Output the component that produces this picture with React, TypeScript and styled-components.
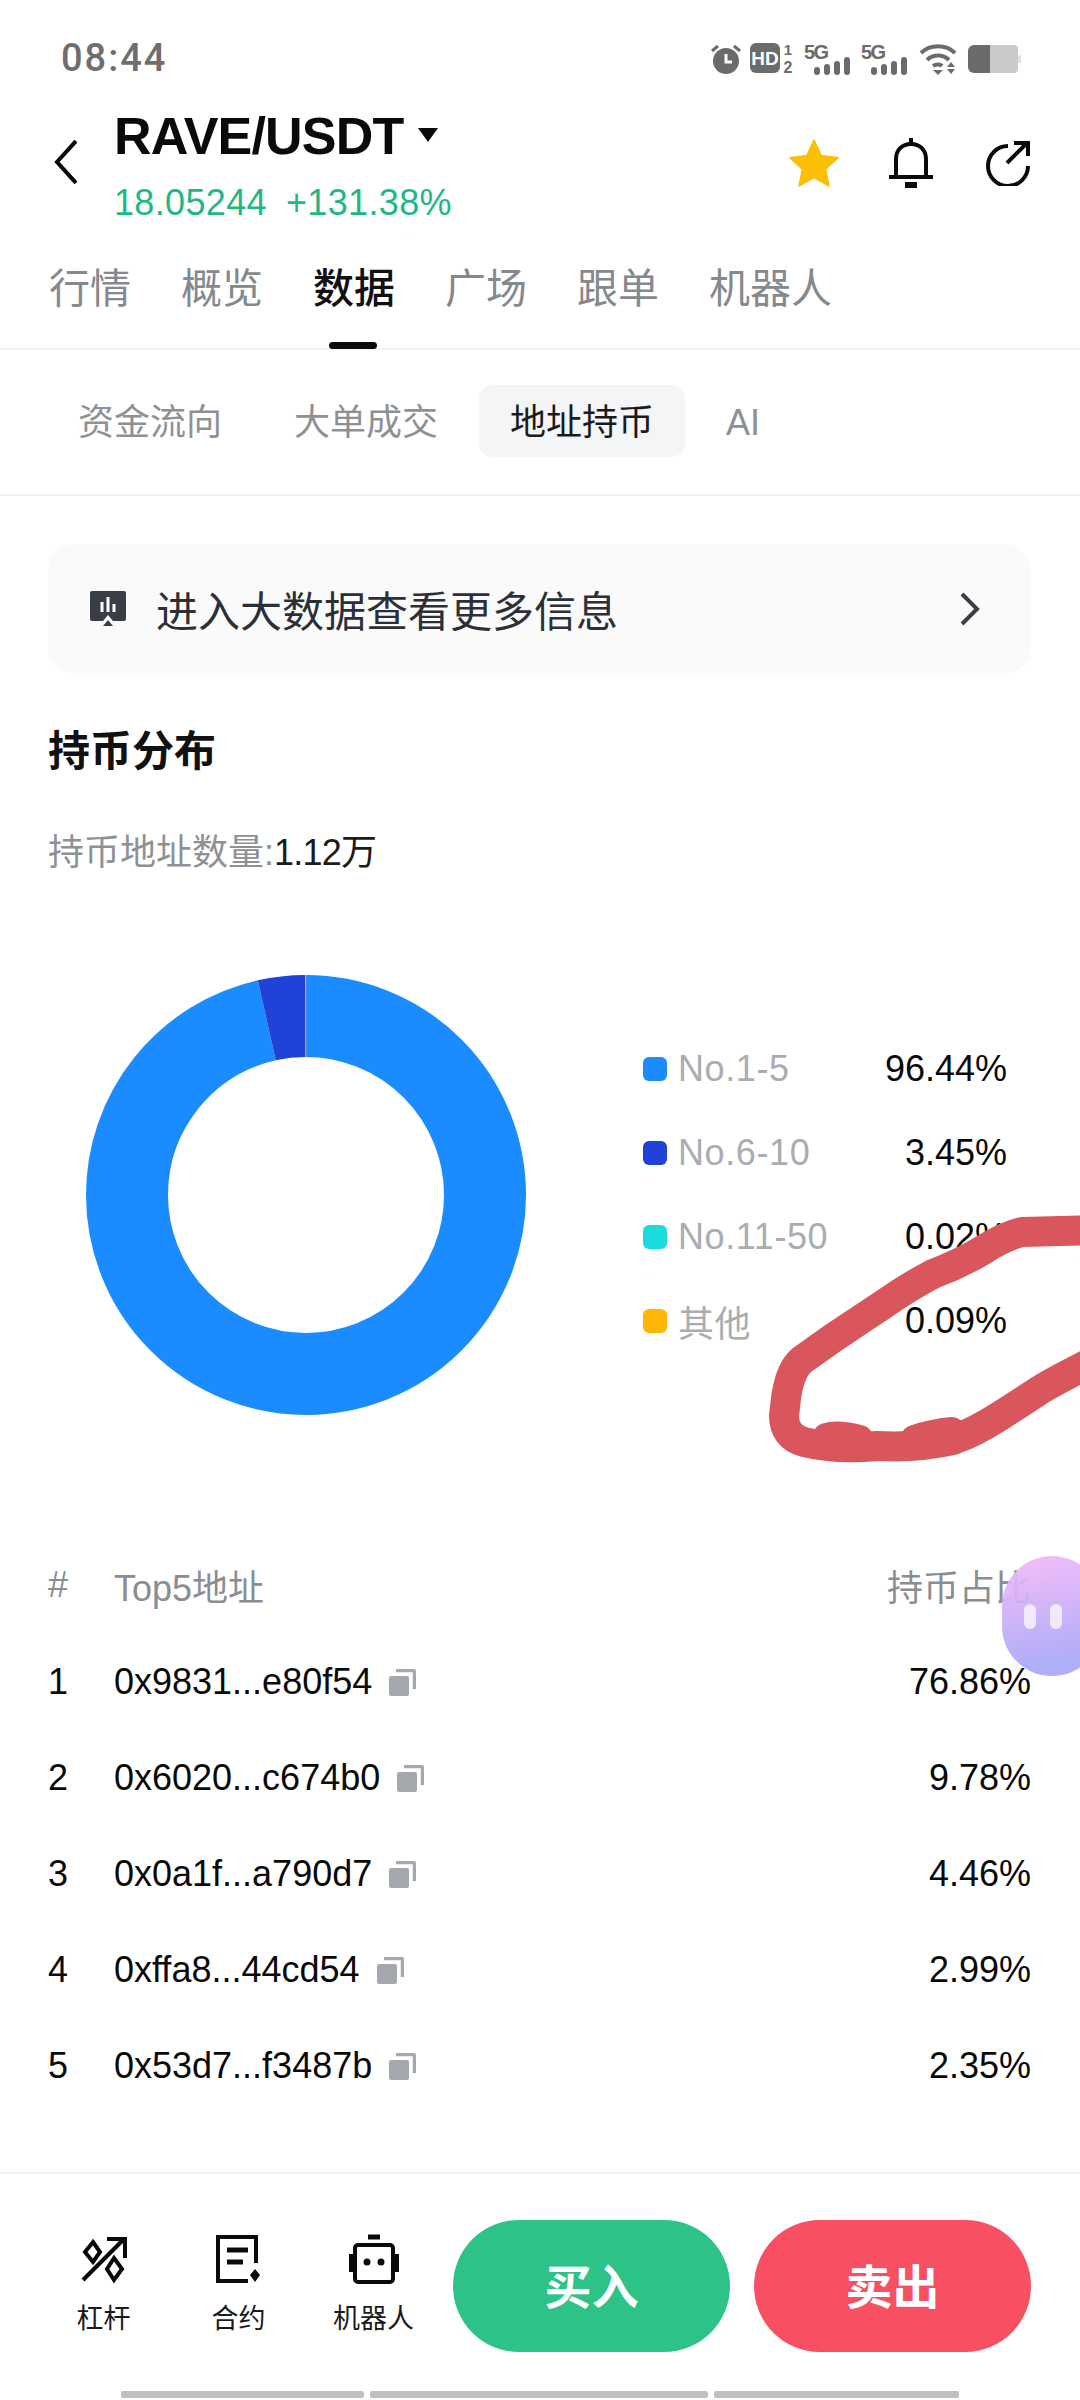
import React from "react";
import styled, { createGlobalStyle } from "styled-components";

const FONT = `"Liberation Sans", "Noto Sans CJK SC", sans-serif`;

const GlobalStyle = createGlobalStyle`
  html, body {
    margin: 0;
    padding: 0;
    background: #fff;
    font-family: ${FONT};
  }
  * { box-sizing: border-box; }
`;

const Page = styled.div`
  position: relative;
  width: 1080px;
  height: 2400px;
  overflow: hidden;
  display: flex;
  flex-direction: column;
  background: #fff;
`;

const StatusBar = styled.div`
  height: 116px;
  flex: none;
  padding: 0 58px 0 61px;
  display: flex;
  align-items: center;
  justify-content: space-between;
  color: #6b6b6b;
`;

const Time = styled.span`
  font-family: Roboto, sans-serif;
  font-size: 38px;
  font-weight: 500;
  letter-spacing: 2px;
  color: #6e6e6e;
`;

const StatusIcons = styled.div`
  display: flex;
  align-items: center;
  margin-top: 2px;
`;

const Header = styled.div`
  height: 134px;
  flex: none;
  display: flex;
  align-items: flex-start;
  padding: 0 50px 0 54px;
`;

const BackButton = styled.svg`
  margin-top: 24px;
  flex: none;
`;

const TitleBlock = styled.div`
  margin-left: 37px;
  flex: 1;
`;

const TitleLine = styled.div`
  height: 40px;
  display: flex;
  align-items: center;
  font-size: 52px;
  font-weight: 700;
  letter-spacing: -0.8px;
  color: #0a0a0a;
`;

const Caret = styled.span`
  width: 0;
  height: 0;
  margin: -2px 0 0 15px;
  border-left: 10px solid transparent;
  border-right: 10px solid transparent;
  border-top: 14px solid #0a0a0a;
`;

const PriceLine = styled.div`
  margin-top: 25px;
  height: 44px;
  line-height: 44px;
  font-size: 36px;
  letter-spacing: 0.35px;
  color: #1fb885;
  display: flex;
  gap: 19px;
`;

const HeaderActions = styled.div`
  margin-top: 22px;
  display: flex;
  align-items: center;
`;

const Tabs = styled.div`
  height: 100px;
  flex: none;
  display: flex;
  gap: 50px;
  padding-left: 49px;
  border-bottom: 2px solid #f2f3f3;
`;

const Tab = styled.div<{ $active?: boolean }>`
  position: relative;
  height: 78px;
  line-height: 78px;
  font-size: 41px;
  font-weight: ${(p) => (p.$active ? 500 : 400)};
  color: ${(p) => (p.$active ? "#111" : "#85888c")};
  ${(p) =>
    p.$active &&
    `
    &::after {
      content: "";
      position: absolute;
      left: 16px;
      top: 92px;
      width: 48px;
      height: 7px;
      border-radius: 4px;
      background: #0a0a0a;
    }
  `}
`;

const SubTabs = styled.div`
  height: 146px;
  flex: none;
  display: flex;
  gap: 10px;
  padding: 35px 0 0 47px;
  border-bottom: 2px solid #f2f3f3;
`;

const SubTab = styled.div<{ $active?: boolean }>`
  height: 72px;
  line-height: 75px;
  padding: 0 31px;
  border-radius: 14px;
  font-size: 36px;
  color: ${(p) => (p.$active ? "#1b1b1b" : "#8e9194")};
  background: ${(p) => (p.$active ? "#f3f5f6" : "transparent")};
`;

const Content = styled.div`
  padding: 0 49px 0 48px;
  display: flex;
  flex-direction: column;
`;

const Banner = styled.div`
  margin-top: 48px;
  height: 129px;
  border-radius: 26px;
  background: #fafafa;
  display: flex;
  align-items: center;
  padding: 0 50px 0 42px;
  font-size: 42px;
  color: #2c3036;
`;

const BannerText = styled.span`
  margin-left: 30px;
  flex: 1;
`;

const SectionTitle = styled.div`
  margin-top: 49px;
  height: 60px;
  line-height: 60px;
  font-size: 42px;
  font-weight: 700;
  color: #111;
`;

const HolderCount = styled.div`
  margin-top: 46px;
  height: 50px;
  line-height: 50px;
  font-size: 36px;
  color: #8e9194;
  span {
    color: #1b1b1b;
    letter-spacing: -0.8px;
  }
`;

const ChartRow = styled.div`
  margin-top: 97px;
  display: flex;
  align-items: center;
  padding-left: 38px;
`;

const Legend = styled.div`
  margin-left: 117px;
  width: 364px;
`;

const LegendRow = styled.div`
  height: 84px;
  display: flex;
  align-items: center;
  font-size: 36px;
`;

const Swatch = styled.span<{ $color: string }>`
  width: 24px;
  height: 24px;
  border-radius: 6px;
  background: ${(p) => p.$color};
  margin-right: 11px;
`;

const LegendLabel = styled.span`
  flex: 1;
  color: #a9adb1;
  letter-spacing: 0.6px;
`;

const LegendValue = styled.span`
  color: #0a0a0a;
`;

const TableHead = styled.div`
  margin-top: 140px;
  height: 60px;
  display: flex;
  align-items: center;
  font-size: 36px;
  color: #8a8d91;
`;

const IndexCell = styled.span`
  width: 66px;
  flex: none;
`;

const AddressCell = styled.span`
  flex: 1;
  display: flex;
  align-items: center;
  gap: 17px;
`;

const TableBody = styled.div`
  margin-top: 19px;
`;

const TableRow = styled.div`
  height: 96px;
  display: flex;
  align-items: center;
  font-size: 36px;
  color: #0a0a0a;
`;

const Footer = styled.div`
  margin-top: auto;
  height: 228px;
  flex: none;
  border-top: 2px solid #f2f3f3;
  padding-top: 46px;
`;

const FooterRow = styled.div`
  display: flex;
  padding-left: 36px;
`;

const Tools = styled.div`
  width: 405px;
  margin-right: 12px;
  display: flex;
`;

const Tool = styled.div`
  width: 135px;
  display: flex;
  flex-direction: column;
  align-items: center;
  padding-top: 14px;
  color: #1a1a1a;
  font-size: 27px;
  svg {
    height: 50px;
  }
`;

const ToolLabel = styled.span`
  margin-top: 17px;
  line-height: 36px;
`;

const Trade = styled.div<{ $color: string }>`
  width: 277px;
  height: 132px;
  padding-bottom: 6px;
  border-radius: 66px;
  background: ${(p) => p.$color};
  color: #fff;
  font-size: 47px;
  font-weight: 700;
  display: flex;
  align-items: center;
  justify-content: center;
  margin-right: 24px;
  &:last-child {
    margin-right: 0;
  }
`;

const HomeBar = styled.div`
  margin-top: 39px;
  padding-left: 121px;
  display: flex;
  gap: 6px;
`;

const HomeSegment = styled.span<{ $width: number }>`
  width: ${(p) => p.$width}px;
  height: 7px;
  background: #c0c0c0;
  border-radius: 2px;
`;

const AssistantBubble = styled.div`
  position: absolute;
  left: 1002px;
  top: 1556px;
  width: 100px;
  height: 120px;
  border-radius: 52px;
  background: linear-gradient(170deg, #f5b9f8 0%, #a9a8f8 85%);
  opacity: 0.93;
  display: flex;
  gap: 14px;
  padding: 48px 0 0 22px;
`;

const BubbleEye = styled.span`
  width: 12px;
  height: 25px;
  border-radius: 6px;
  background: #f1e9fd;
`;

const Scribble = styled.svg`
  position: absolute;
  left: 760px;
  top: 1200px;
`;

const AlarmIcon = () => (
  <svg width="30" height="32" viewBox="0 0 30 32">
    <circle cx="15" cy="18" r="13" fill="#6b6b6b" />
    <path d="M15 11v8h6" fill="none" stroke="#fff" strokeWidth="3" />
    <path d="M1 8l6-5M29 8l-6-5" stroke="#6b6b6b" strokeWidth="3" />
  </svg>
);

const HdIcon = () => (
  <svg width="44" height="36" viewBox="0 0 44 36" style={{ marginLeft: 9 }}>
    <rect x="0" y="2" width="30" height="30" rx="6" fill="#6b6b6b" />
    <text x="15" y="24" textAnchor="middle" fontSize="19" fontWeight="700" fill="#fff" fontFamily="Liberation Sans">
      HD
    </text>
    <text x="38" y="14" textAnchor="middle" fontSize="15" fontWeight="700" fill="#6b6b6b" fontFamily="Liberation Sans">
      1
    </text>
    <text x="38" y="32" textAnchor="middle" fontSize="16" fontWeight="700" fill="#6b6b6b" fontFamily="Liberation Sans">
      2
    </text>
  </svg>
);

const SignalIcon = ({ left }: { left: number }) => (
  <svg width="46" height="38" viewBox="0 0 46 38" style={{ marginLeft: left }}>
    <text x="0" y="19" fontSize="20" fontWeight="700" fill="#6b6b6b" fontFamily="Liberation Sans" textLength="25">
      5G
    </text>
    <rect x="10" y="27" width="6" height="8" rx="3" fill="#6b6b6b" />
    <rect x="20" y="24" width="6" height="11" rx="3" fill="#6b6b6b" />
    <rect x="30" y="21" width="6" height="14" rx="3" fill="#6b6b6b" />
    <rect x="40" y="17" width="6" height="18" rx="3" fill="#6b6b6b" />
  </svg>
);

const WifiIcon = () => (
  <svg width="38" height="32" viewBox="0 0 38 32" style={{ marginLeft: 12 }}>
    <path d="M2 10c9-9 25-9 34 0" fill="none" stroke="#6b6b6b" strokeWidth="4" />
    <path d="M8 17c6-6 16-6 22 0" fill="none" stroke="#6b6b6b" strokeWidth="4" />
    <path d="M14 23c3-2 7-2 9 0" fill="none" stroke="#6b6b6b" strokeWidth="4" />
    <path d="M14 27h10l-5 5z" fill="#6b6b6b" />
    <path d="M28 24l4-5 4 5zM28 26h8l-4 5z" fill="#6b6b6b" />
  </svg>
);

const BatteryIcon = () => (
  <svg width="54" height="28" viewBox="0 0 54 28" style={{ marginLeft: 11 }}>
    <path d="M22 0h24a4 4 0 0 1 4 4v20a4 4 0 0 1-4 4H22z" fill="#cacaca" />
    <path d="M22 0H6a6 6 0 0 0-6 6v16a6 6 0 0 0 6 6h16z" fill="#6b6b6b" />
    <rect x="50" y="10" width="3" height="8" rx="1.5" fill="#dedede" />
  </svg>
);

const StarIcon = () => (
  <svg width="52" height="48" viewBox="0 0 52 48">
    <path
      d="M26 1l7.2 15.6 17 2.1-12.6 11.5 3.4 16.8L26 38.6 11 47l3.4-16.8L1.8 18.7l17-2.1z"
      fill="#fdbf06"
      stroke="#fdbf06"
      strokeLinejoin="round"
      strokeWidth="1.5"
    />
  </svg>
);

const BellIcon = () => (
  <svg width="44" height="50" viewBox="0 0 44 50" style={{ marginLeft: 49 }} fill="none" stroke="#0a0a0a" strokeWidth="4">
    <path d="M22 0v6" />
    <path d="M7 38V21c0-9 6-15 15-15s15 6 15 15v17" />
    <path d="M0 39h44" />
    <path d="M16 47h12" strokeWidth="6" />
  </svg>
);

const ShareIcon = () => (
  <svg width="44" height="46" viewBox="0 0 44 46" style={{ marginLeft: 53 }} fill="none" stroke="#0a0a0a" strokeWidth="4">
    <path d="M22 6a20 20 0 1 0 20 20" />
    <path d="M21 23L41 3" />
    <path d="M28 3h14v13" />
  </svg>
);

const CopyIcon = () => (
  <svg width="27" height="27" viewBox="0 0 27 27">
    <rect x="0" y="7" width="20" height="20" rx="2" fill="#a5a8ad" />
    <path d="M7 1.5h17a1.5 1.5 0 0 1 1.5 1.5v17" fill="none" stroke="#a5a8ad" strokeWidth="3.5" />
  </svg>
);

const DataIcon = () => (
  <svg width="36" height="36" viewBox="0 0 36 36">
    <path d="M2 0h32a2 2 0 0 1 2 2v26a2 2 0 0 1-2 2H23l-5-6-5 6H2a2 2 0 0 1-2-2V2a2 2 0 0 1 2-2z" fill="#3a3f47" />
    <path d="M12 11v10M18 6v15M24 13v8" stroke="#fff" strokeWidth="3" />
    <path d="M13 35l5-6 5 6z" fill="#3a3f47" />
  </svg>
);

const LeverageIcon = () => (
  <svg width="46" height="46" viewBox="0 0 46 46" fill="none" stroke="#0a0a0a" strokeWidth="4">
    <path d="M2 44L43 3" />
    <path d="M26 3h18v19" />
    <path d="M12 6l7 10-7 10-8-10z" />
    <path d="M33 22l8 11-8 11-7-11z" />
  </svg>
);

const ContractIcon = () => (
  <svg width="46" height="48" viewBox="0 0 46 48" fill="none" stroke="#0a0a0a" strokeWidth="4">
    <path d="M40 28V2H2v44h30" />
    <path d="M11 15h21M11 27h16" strokeWidth="5" />
    <path d="M39 34l5 6-5 7-5-7z" fill="#0a0a0a" stroke="none" />
  </svg>
);

const RobotIcon = () => (
  <svg width="50" height="50" viewBox="0 0 50 50" fill="none" stroke="#0a0a0a" strokeWidth="4">
    <path d="M19 3h12" strokeWidth="5" />
    <rect x="6" y="11" width="38" height="37" rx="3" />
    <path d="M2 20v18M48 20v18" />
    <circle cx="18" cy="28" r="3.5" fill="#0a0a0a" stroke="none" />
    <circle cx="32" cy="28" r="3.5" fill="#0a0a0a" stroke="none" />
  </svg>
);

const holdings = [
  { value: 96.44, color: "#1a8cff", label: "No.1-5" },
  { value: 3.45, color: "#2042d6", label: "No.6-10" },
  { value: 0.02, color: "#1bdcdc", label: "No.11-50" },
  { value: 0.09, color: "#ffb606", label: "其他" },
];

const addresses = [
  { address: "0x9831...e80f54", share: "76.86%" },
  { address: "0x6020...c674b0", share: "9.78%" },
  { address: "0x0a1f...a790d7", share: "4.46%" },
  { address: "0xffa8...44cd54", share: "2.99%" },
  { address: "0x53d7...f3487b", share: "2.35%" },
];

const Donut = () => {
  const radius = 179;
  const length = 2 * Math.PI * radius;
  let offset = 0;
  return (
    <svg width="440" height="440" viewBox="0 0 440 440" style={{ flex: "none" }}>
      <g transform="rotate(-90 220 220)">
        {holdings.map((h) => {
          const part = (h.value / 100) * length;
          const circle = (
            <circle
              key={h.label}
              cx="220"
              cy="220"
              r={radius}
              fill="none"
              stroke={h.color}
              strokeWidth="82"
              strokeDasharray={`${part} ${length - part}`}
              strokeDashoffset={-offset}
            />
          );
          offset += part;
          return circle;
        })}
      </g>
      <path d="M220 1v81" stroke="#7f8ea8" strokeWidth="1" />
    </svg>
  );
};

export default function App() {
  return (
    <Page>
      <GlobalStyle />
      <StatusBar>
        <Time>08:44</Time>
        <StatusIcons>
          <AlarmIcon />
          <HdIcon />
          <SignalIcon left={10} />
          <SignalIcon left={11} />
          <WifiIcon />
          <BatteryIcon />
        </StatusIcons>
      </StatusBar>

      <Header>
        <BackButton width="23" height="44" viewBox="0 0 23 44" fill="none" stroke="#0a0a0a" strokeWidth="4">
          <path d="M22 1L3 22l19 21" />
        </BackButton>
        <TitleBlock>
          <TitleLine>
            RAVE/USDT
            <Caret />
          </TitleLine>
          <PriceLine>
            <span>18.05244</span>
            <span>+131.38%</span>
          </PriceLine>
        </TitleBlock>
        <HeaderActions>
          <StarIcon />
          <BellIcon />
          <ShareIcon />
        </HeaderActions>
      </Header>

      <Tabs>
        <Tab>行情</Tab>
        <Tab>概览</Tab>
        <Tab $active>数据</Tab>
        <Tab>广场</Tab>
        <Tab>跟单</Tab>
        <Tab>机器人</Tab>
      </Tabs>

      <SubTabs>
        <SubTab>资金流向</SubTab>
        <SubTab>大单成交</SubTab>
        <SubTab $active>地址持币</SubTab>
        <SubTab>AI</SubTab>
      </SubTabs>

      <Content>
        <Banner>
          <DataIcon />
          <BannerText>进入大数据查看更多信息</BannerText>
          <svg width="22" height="34" viewBox="0 0 22 34" fill="none" stroke="#3a3f47" strokeWidth="4">
            <path d="M3 2l15 15L3 32" />
          </svg>
        </Banner>

        <SectionTitle>持币分布</SectionTitle>
        <HolderCount>
          持币地址数量:<span>1.12万</span>
        </HolderCount>

        <ChartRow>
          <Donut />
          <Legend>
            {holdings.map((h) => (
              <LegendRow key={h.label}>
                <Swatch $color={h.color} />
                <LegendLabel>{h.label}</LegendLabel>
                <LegendValue>{h.value.toFixed(2)}%</LegendValue>
              </LegendRow>
            ))}
          </Legend>
        </ChartRow>

        <TableHead>
          <IndexCell>#</IndexCell>
          <AddressCell>Top5地址</AddressCell>
          <span>持币占比</span>
        </TableHead>
        <TableBody>
          {addresses.map((a, i) => (
            <TableRow key={a.address}>
              <IndexCell>{i + 1}</IndexCell>
              <AddressCell>
                {a.address}
                <CopyIcon />
              </AddressCell>
              <span>{a.share}</span>
            </TableRow>
          ))}
        </TableBody>
      </Content>

      <Footer>
        <FooterRow>
          <Tools>
            <Tool>
              <LeverageIcon />
              <ToolLabel>杠杆</ToolLabel>
            </Tool>
            <Tool>
              <ContractIcon />
              <ToolLabel>合约</ToolLabel>
            </Tool>
            <Tool>
              <RobotIcon />
              <ToolLabel>机器人</ToolLabel>
            </Tool>
          </Tools>
          <Trade $color="#2dc287">买入</Trade>
          <Trade $color="#f84f63">卖出</Trade>
        </FooterRow>
        <HomeBar>
          <HomeSegment $width={243} />
          <HomeSegment $width={338} />
          <HomeSegment $width={245} />
        </HomeBar>
      </Footer>

      <AssistantBubble>
        <BubbleEye />
        <BubbleEye />
      </AssistantBubble>

      <Scribble width="320" height="270" viewBox="0 0 320 270" fill="none" stroke="#d9575c" strokeLinecap="round" strokeLinejoin="round" strokeWidth="30">
        <path d="M340 30L262 32Q245 36 223 50Q200 64 173 74Q150 86 127 102L73 138L42 160Q30 170 26 198L24 216Q24 236 44 242Q76 250 117 246Q160 248 193 240Q215 232 240 216Q262 202 280 190Q300 178 340 158" />
        <path d="M66 236Q78 232 100 238M154 238Q172 232 192 230" strokeWidth="26" />
      </Scribble>
    </Page>
  );
}
